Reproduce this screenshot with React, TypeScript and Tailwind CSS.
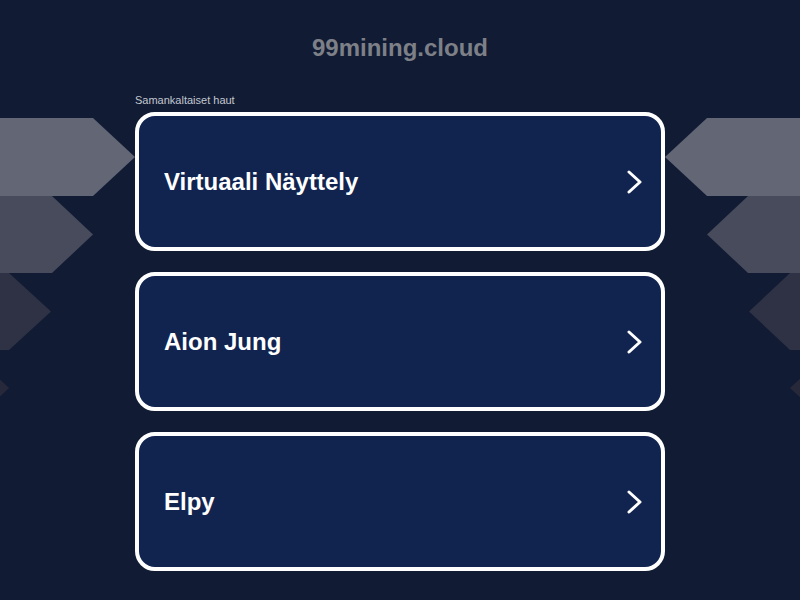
import React from "react";

const items = ["Virtuaali Näyttely", "Aion Jung", "Elpy"];

function Chevron() {
  return (
    <svg width="16" height="24" viewBox="0 0 16 24" fill="none" className="shrink-0">
      <path d="M2 2 L13 12 L2 22" stroke="#ffffff" strokeWidth="3" strokeLinecap="round" strokeLinejoin="round" />
    </svg>
  );
}

function Decorations() {
  return (
    <svg
      className="absolute inset-0 pointer-events-none"
      width="800"
      height="600"
      viewBox="0 0 800 600"
    >
      <polygon points="0,118 93,118 135,157 93,196 0,196" fill="#626675" />
      <polygon points="0,196 52,196 93,234.5 52,273 0,273" fill="#484b5b" />
      <polygon points="0,273 9,273 51,311.5 9,350 0,350" fill="#2f3244" />
      <polygon points="0,379.6 9,388 0,396.4" fill="#27293b" />

      <polygon points="800,118 707,118 665,157 707,196 800,196" fill="#626675" />
      <polygon points="800,196 748,196 707,234.5 748,273 800,273" fill="#484b5b" />
      <polygon points="800,273 790,273 749,311.5 790,350 800,350" fill="#2f3244" />
      <polygon points="800,378.7 790,388 800,397.3" fill="#27293b" />
    </svg>
  );
}

export default function App() {
  return (
    <div
      className="relative w-[800px] h-[600px] overflow-hidden bg-[#111b34]"
      style={{ fontFamily: '"Liberation Sans", Arial, sans-serif' }}
    >
      <Decorations />
      <div className="relative flex flex-col items-center pt-[34px]">
        <h1 className="text-[24px] leading-[28px] font-bold text-[#7e8088]">99mining.cloud</h1>
        <div className="w-[530px] mt-[31px]">
          <div className="text-[11px] leading-[14px] text-[#c3c7d0]">Samankaltaiset haut</div>
          <div className="mt-[5px] flex flex-col gap-[21px]">
            {items.map((t) => (
              <div
                key={t}
                className="h-[139px] rounded-[20px] border-4 border-white bg-[#112450] flex items-center justify-between pl-[25px] pr-[18px]"
              >
                <span className="text-[24px] leading-[28px] font-bold text-white">{t}</span>
                <Chevron />
              </div>
            ))}
          </div>
        </div>
      </div>
    </div>
  );
}
